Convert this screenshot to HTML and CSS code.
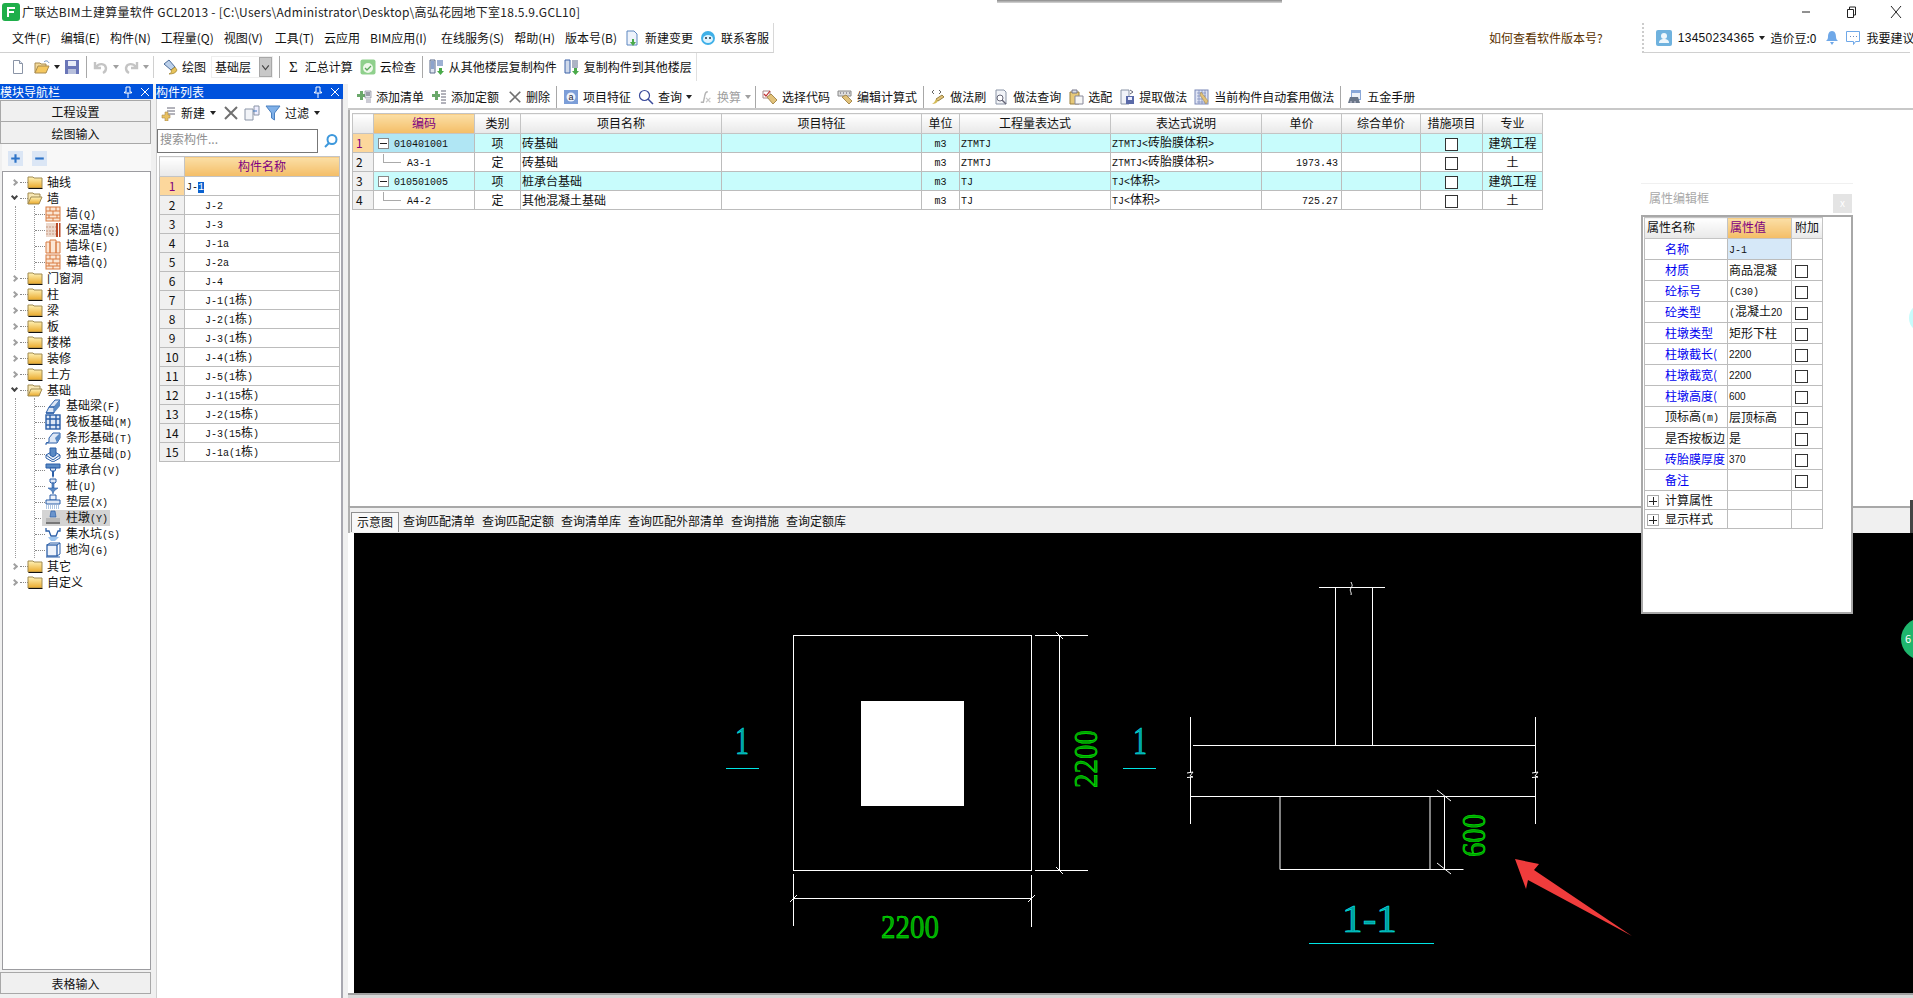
FILE: index.html
```html
<!DOCTYPE html>
<html lang="zh-CN">
<head>
<meta charset="utf-8">
<title>广联达BIM土建算量软件 GCL2013</title>
<link rel="stylesheet" href="styles.css">
</head>
<body>
<svg class="defs" aria-hidden="true">
<defs>
<linearGradient id="fg" x1="0" y1="0" x2="0" y2="1"><stop offset="0" stop-color="#fff3b8"/><stop offset="1" stop-color="#eaa92a"/></linearGradient>
<symbol id="app" viewBox="0 0 18 18"><rect x="0" y="0" width="18" height="18" rx="3" fill="#1fae4a"/><path d="M5 4h8v2H7v2h5v2H7v4H5z" fill="#fff"/></symbol>
<symbol id="doc" viewBox="0 0 16 16"><path d="M3.500 1.500h6l3 3v10h-9z" fill="#fff" stroke="#8a94a6"/><path d="M9.500 1.500v3h3" fill="#dfe6f2" stroke="#8a94a6"/></symbol>
<symbol id="open" viewBox="0 0 16 16"><path d="M1 14V4h5l1 1h5v2" fill="#f3d99a" stroke="#a88b50"/><path d="M1 14l3-7h11l-3 7z" fill="#f5c860" stroke="#a88b50"/><path d="M10 3c2-2 4-1 5 1" fill="none" stroke="#6a8fc0"/></symbol>
<symbol id="save" viewBox="0 0 16 16"><rect x="1" y="1" width="14" height="14" fill="#6a76b8"/><rect x="4" y="2" width="8" height="5" fill="#e8ecf8"/><rect x="4" y="10" width="8" height="5" fill="#b8c0dc"/></symbol>
<symbol id="undo" viewBox="0 0 16 16"><path d="M2 3v6h6M3 8c3-4 9-4 10 1 0 2-1 4-3 5" fill="none" stroke="#c4c4c4" stroke-width="2.400"/></symbol>
<symbol id="redo" viewBox="0 0 16 16"><path d="M14 3v6H8M13 8C10 4 4 4 3 9c0 2 1 4 3 5" fill="none" stroke="#c4c4c4" stroke-width="2.400"/></symbol>
<symbol id="paint" viewBox="0 0 16 16"><path d="M2 5l5-4 6 7-4 3z" fill="#bcd0ea" stroke="#4d6d9a"/><path d="M9 11l4-3 2 3c-1 3-4 4-8 4 2-1 3-2 2-4z" fill="#e8c35a" stroke="#9a7d2a" stroke-width=".7"/></symbol>
<symbol id="cloud" viewBox="0 0 16 16"><rect x="0.500" y="0.500" width="15" height="15" rx="2" fill="#8fd08c"/><circle cx="8" cy="9" r="5" fill="#eef8ea"/><path d="M5 9l2 2 4-4" fill="none" stroke="#5aa85a" stroke-width="1.300"/></symbol>
<symbol id="copy1" viewBox="0 0 16 16"><path d="M1 1h5v13H1z" fill="#dfe6f0" stroke="#5a6a8a"/><path d="M2 3h3M2 5h3M2 7h3M2 9h3M8 2h6M8 4h6M8 6h6" stroke="#3c62a8"/><path d="M10 9h3v3h2l-3.500 4L8 12h2z" fill="#4aaa4a"/></symbol>
<symbol id="copy2" viewBox="0 0 16 16"><path d="M1 1h5v13H1z" fill="#cfd9ea" stroke="#3c62a8"/><path d="M8 2h6M8 4h6M8 6h6M8 8h6" stroke="#5a6a8a"/><path d="M10 9h3v3h2l-3.500 4L8 12h2z" fill="#4aaa4a"/></symbol>
<symbol id="newc" viewBox="0 0 16 16"><path d="M3 1h7l3 3v11H3z" fill="#eef3fb" stroke="#5d87c0"/><path d="M8 9h2v3h2l-3 4-3-4h2z" fill="#4aaa4a"/></symbol>
<symbol id="svc" viewBox="0 0 16 16"><circle cx="8" cy="8" r="7" fill="#3fb0e8"/><ellipse cx="8" cy="9" rx="5" ry="4" fill="#dff4ff"/><circle cx="6" cy="8" r="1" fill="#234"/><circle cx="10" cy="8" r="1" fill="#234"/></symbol>
<symbol id="addl" viewBox="0 0 16 16"><path d="M1 5h3V2h3v3h2v3H7v3H4V8H1z" fill="#6aa86a"/><path d="M9 2h6v7H9z" fill="#e4e8ee" stroke="#778" stroke-width=".6"/><path d="M10 4h4M10 6h4" stroke="#556"/><path d="M10 11h5M10 13h5" stroke="#99a"/></symbol>
<symbol id="addd" viewBox="0 0 16 16"><path d="M1 5h3V2h3v3h2v3H7v3H4V8H1z" fill="#6aa86a"/><path d="M10 2h5M10 5h5M10 8h5M10 11h5M10 14h5" stroke="#667"/></symbol>
<symbol id="del" viewBox="0 0 16 16"><path d="M2 2l12 12M14 2L2 14" stroke="#707070" stroke-width="2"/></symbol>
<symbol id="feat" viewBox="0 0 16 16"><rect x="1" y="1" width="14" height="14" fill="#7c9ed8"/><circle cx="8" cy="8" r="4.500" fill="#eef2fa"/><text x="8" y="11" font-size="9" text-anchor="middle" fill="#223" font-family="Liberation Sans">a</text></symbol>
<symbol id="find" viewBox="0 0 16 16"><circle cx="6.500" cy="6.500" r="5" fill="none" stroke="#3a4a9a" stroke-width="1.200"/><path d="M10 10l5 5" stroke="#3a4a9a" stroke-width="1.500"/></symbol>
<symbol id="fx" viewBox="0 0 16 16"><path d="M10 2C7 2 7 4 6.500 7L5 14H2" fill="none" stroke="#b4b4b4" stroke-width="1.600"/><path d="M8 9l5 5M13 9l-5 5" stroke="#c8c8c8" stroke-width="1.400"/></symbol>
<symbol id="pick" viewBox="0 0 16 16"><path d="M1 2h7v7H1z" fill="#fff" stroke="#a88"/><path d="M2 5l2 2 4-5" fill="none" stroke="#c03030" stroke-width="1.200"/><path d="M5 8l4-3 6 6-4 4z" fill="#e2c27a" stroke="#a88b50"/></symbol>
<symbol id="edit" viewBox="0 0 16 16"><path d="M1 2h13v5H1z" fill="#ddd" stroke="#888"/><path d="M3 4h1M6 4h1M9 4h1M12 4h1" stroke="#556"/><path d="M5 8l4-2 6 6-3 3z" fill="#e2c27a" stroke="#a88b50"/></symbol>
<symbol id="brush" viewBox="0 0 16 16"><path d="M2 3l2-2M2 3l2 2M9 1l2 2-2 2" fill="none" stroke="#666"/><path d="M12 6l2 2-6 4-2-2z" fill="#e2c27a" stroke="#968040"/><path d="M6 10l2 2c-1 2-3 3-6 3 2-1 3-3 4-5z" fill="#d4bb58"/></symbol>
<symbol id="qry" viewBox="0 0 16 16"><path d="M3 1h8l2 2v12H3z" fill="#f2f4f8" stroke="#8a94a6"/><circle cx="7" cy="9" r="3" fill="#fff" stroke="#667"/><path d="M9 11l4 4" stroke="#667" stroke-width="1.400"/></symbol>
<symbol id="sel" viewBox="0 0 16 16"><path d="M2 3h9v12H2z" fill="#e6c878" stroke="#9a8040"/><path d="M4 1h5v3H4z" fill="#d8dce6" stroke="#778"/><path d="M7 7h8v8H7z" fill="#f6f6f6" stroke="#889"/></symbol>
<symbol id="ext" viewBox="0 0 16 16"><path d="M2 1h8v14H2z" fill="#f0f2f8" stroke="#8a94a6"/><rect x="7" y="7" width="8" height="8" fill="#5a6aa8"/><rect x="9" y="8" width="4" height="3" fill="#eef"/><path d="M11 1l3 2-3 2" fill="none" stroke="#667"/></symbol>
<symbol id="auto" viewBox="0 0 16 16"><rect x="1" y="1" width="13" height="14" fill="#dfe4f4" stroke="#7a88b8"/><path d="M3 4h9M3 7h9M3 10h9M3 13h9M5 1v14M8 1v14M11 1v14" stroke="#7a88b8" stroke-width=".7"/><path d="M7 3l7 9-2 3-6-9z" fill="#e2c27a" stroke="#a88b50" stroke-width=".6"/></symbol>
<symbol id="hand" viewBox="0 0 16 16"><path d="M4 1h10v10H4z" fill="#8aa8d8"/><path d="M5 4h8v6H5z" fill="#eef2f8"/><path d="M1 14l2-6h8l2 6z" fill="#6a7688"/><path d="M3 13h2M7 13h2" stroke="#ccd"/></symbol>
<symbol id="user" viewBox="0 0 16 16"><rect width="16" height="16" rx="2" fill="#6fb2de"/><circle cx="8" cy="6" r="3" fill="#eef7fc"/><path d="M3 13c0-3 2-4 5-4s5 1 5 4z" fill="#eef7fc"/></symbol>
<symbol id="bell" viewBox="0 0 16 16"><path d="M8 1c3 0 4 3 4 6 0 2 1 3 2 4H2c1-1 2-2 2-4 0-3 1-6 4-6z" fill="#6fa8e8"/><path d="M6 12h4l-2 3z" fill="#6fa8e8"/></symbol>
<symbol id="chat" viewBox="0 0 16 16"><path d="M1.500 1.500h13v10h-4l-2 3v-3h-7z" fill="#fff" stroke="#6fa8e8"/><path d="M5 6.500h1M8 6.500h1M11 6.500h1" stroke="#6a8ac0"/></symbol>
<symbol id="search" viewBox="0 0 16 16"><circle cx="9" cy="6.500" r="4.500" fill="none" stroke="#3d98dc" stroke-width="2"/><path d="M6 10l-4 4" stroke="#3d98dc" stroke-width="2"/></symbol>
<symbol id="newp" viewBox="0 0 16 16"><path d="M6 3h8M6 6h8M6 9h8" stroke="#667"/><path d="M1 10h3V7h3v3h2v3H7v3H4v-3H1z" fill="#e8c060" stroke="#a88b50" stroke-width=".6"/></symbol>
<symbol id="cpy" viewBox="0 0 16 16"><path d="M1 4h8v11H1z" fill="#f2f4f8" stroke="#8a94a6"/><path d="M10 1h5v9h-5z" fill="#eef" stroke="#8a94a6"/><path d="M9 6h4" stroke="#3c78c0"/></symbol>
<symbol id="filt" viewBox="0 0 16 16"><path d="M1 1h14L9.500 8v7l-3-2V8z" fill="#7fb0e8" stroke="#4a80c0"/></symbol>
<symbol id="fold" viewBox="0 0 16 16"><path d="M1 14V3h5l1 1h8v10z" fill="url(#fg)" stroke="#a08a50"/><path d="M1.500 14.500h14" stroke="#111"/></symbol>
<symbol id="foldo" viewBox="0 0 16 16"><path d="M1 14V3h5l1 1h6v3" fill="#f7e7b4" stroke="#a08a50"/><path d="M1 14l3-7h11l-3 7z" fill="url(#fg)" stroke="#a08a50"/></symbol>
<symbol id="wall" viewBox="0 0 16 16"><rect x="1" y="1" width="14" height="14" fill="#fbe6d4" stroke="#d87a40"/><path d="M1 5h14M1 9h14M1 12h14M5 1v4M11 1v4M8 5v4M4 9v3M12 9v3M8 12v3" stroke="#d87a40"/></symbol>
<symbol id="wall2" viewBox="0 0 16 16"><rect x="1" y="1" width="10" height="14" fill="#ecd8cc"/><path d="M1 5h10M1 9h10M1 12h10" stroke="#c89880" stroke-dasharray="2 1"/><rect x="11" y="1" width="2" height="14" fill="#b84a28"/><rect x="14" y="1" width="1.500" height="14" fill="#b84a28"/></symbol>
<symbol id="pier" viewBox="0 0 16 16"><path d="M1 4h4v11H1zM5 2h6v13H5zM11 4h4v11h-4z" fill="#fbe6d4" stroke="#d87a40"/></symbol>
<symbol id="beam" viewBox="0 0 16 16"><path d="M1 15l3-6h5v6zM4 9l6-7h5l-6 7z" fill="#dde7f5" stroke="#2b5fa8"/><path d="M9 15l6-7V2L9 9z" fill="#5a8ac4"/><path d="M1 15h8" stroke="#2b5fa8" stroke-width="1.500"/></symbol>
<symbol id="raft" viewBox="0 0 16 16"><rect x="1" y="1" width="14" height="14" fill="#dde7f5" stroke="#2b5fa8" stroke-width="1.400"/><path d="M1 5h14M1 11h14M5 1v14M11 1v14" stroke="#2b5fa8" stroke-width="1.400"/></symbol>
<symbol id="strip" viewBox="0 0 16 16"><path d="M1 15v-2l3-1V8l4-5h7v5l-3 5H1" fill="#dde7f5" stroke="#2b5fa8"/><path d="M10 8l5-5v5l-3 5z" fill="#5a8ac4"/></symbol>
<symbol id="iso" viewBox="0 0 16 16"><path d="M1 9l7-4 7 4-7 5z" fill="#e6eef8" stroke="#2b5fa8"/><path d="M1 9v3l7 4 7-4V9" fill="none" stroke="#2b5fa8"/><path d="M5 2h6v7l-3 2-3-2z" fill="#5a8ac4" stroke="#2b5fa8"/></symbol>
<symbol id="cap" viewBox="0 0 16 16"><path d="M1 2h14v4H1z" fill="#5a8ac4" stroke="#2b5fa8"/><path d="M5 6h6l-1 3H6z" fill="#dde7f5" stroke="#2b5fa8"/><path d="M7 9h2v5l-1 2-1-2z" fill="#2b5fa8"/></symbol>
<symbol id="pile" viewBox="0 0 16 16"><path d="M5 1h6v3l-1 1H6L5 4z" fill="#dde7f5" stroke="#2b5fa8"/><path d="M7 5h2v5H7z" fill="#5a8ac4" stroke="#2b5fa8" stroke-width=".6"/><path d="M3 10h10l-4 3-1 3-1-3z" fill="#5a8ac4" stroke="#2b5fa8" stroke-width=".6"/></symbol>
<symbol id="bed" viewBox="0 0 16 16"><path d="M5 1h6v5H5z" fill="#eef3fb" stroke="#2b5fa8"/><path d="M1 6h14v4H1z" fill="#dde7f5" stroke="#2b5fa8"/><path d="M1 12h14M1 14h14" stroke="#5a8ac4" stroke-dasharray="1 1"/></symbol>
<symbol id="ped" viewBox="0 0 16 16"><path d="M6 1h4l1 6H5z" fill="#6a94cc" stroke="#2b5fa8" stroke-width=".7"/><path d="M1 8h14v4H1z" fill="#b8b8b8"/><path d="M1 13h14" stroke="#777" stroke-width="2"/></symbol>
<symbol id="pit" viewBox="0 0 16 16"><path d="M1 2v3h3l2 5h5l2-5h2V2" fill="none" stroke="#2b5fa8" stroke-width="1.300"/><path d="M3 11h11l-4 4H6z" fill="#9cc4ee"/></symbol>
<symbol id="tr" viewBox="0 0 16 16"><rect x="2" y="3" width="10" height="11" fill="#eef3fb" stroke="#2b5fa8" stroke-width="1.300"/><path d="M2 3l3-2h10l-3 2M12 14l3-2V1M1 15h14" fill="none" stroke="#2b5fa8"/></symbol>
</defs>
</svg>

<div class="app">
  <header class="titlebar">
    <svg class="app-icon"><use href="#app"/></svg>
    <span class="title-text">广联达BIM土建算量软件 GCL2013 - [C:\Users\Administrator\Desktop\高弘花园地下室18.5.9.GCL10]</span>
    <div class="winctl">
      <svg class="wc" viewBox="0 0 12 12"><path d="M2 6h8" stroke="#222"/></svg>
      <svg class="wc" viewBox="0 0 12 12"><path d="M2.500 3.500h6v8h-6zM4.500 3.500v-2.500h6v8h-2" fill="none" stroke="#222"/></svg>
      <svg class="wc" viewBox="0 0 12 12"><path d="M1 0l10 12M11 0L1 12" stroke="#222"/></svg>
    </div>
  </header>
  <div class="topshadow"></div>

  <div class="menurow">
    <nav class="menu">
      <span>文件(F)</span><span>编辑(E)</span><span>构件(N)</span><span>工程量(Q)</span><span>视图(V)</span><span class="mx2">工具(T)</span><span>云应用</span><span>BIM应用(I)</span><span class="mx4">在线服务(S)</span><span>帮助(H)</span><span>版本号(B)</span>
      <span class="mi"><svg class="i"><use href="#newc"/></svg>新建变更</span>
      <span class="mi"><svg class="i"><use href="#svc"/></svg>联系客服</span>
    </nav>
    <a class="help">如何查看软件版本号?</a>
    <div class="userbar">
      <svg class="i"><use href="#user"/></svg>
      <span class="phone">13450234365</span><i class="arrow dark"></i>
      <span>造价豆:0</span>
      <svg class="i bellic"><use href="#bell"/></svg>
      <svg class="i"><use href="#chat"/></svg>
      <span>我要建议</span>
    </div>
  </div>

  <div class="toolrow">
    <svg class="i"><use href="#doc"/></svg>
    <svg class="i ic-b"><use href="#open"/></svg><i class="arrow dark"></i>
    <svg class="i"><use href="#save"/></svg>
    <b class="div"></b>
    <svg class="i"><use href="#undo"/></svg><i class="arrow"></i>
    <svg class="i"><use href="#redo"/></svg><i class="arrow"></i>
    <b class="div dots"></b>
    <span class="tool"><svg class="i"><use href="#paint"/></svg>绘图</span>
    <span class="floor"><span>基础层</span><i class="floor-btn"><svg viewBox="0 0 10 10"><path d="M2 3l3 4 3-4" fill="none" stroke="#444"/></svg></i></span>
    <b class="div"></b>
    <span class="tool sigma"><em>Σ</em>汇总计算</span>
    <span class="tool"><svg class="i"><use href="#cloud"/></svg>云检查</span>
    <b class="div"></b>
    <span class="tool"><svg class="i"><use href="#copy1"/></svg>从其他楼层复制构件</span>
    <span class="tool"><svg class="i"><use href="#copy2"/></svg>复制构件到其他楼层</span>
  </div>

  <main class="main">
    <aside class="nav">
      <div class="phead"><span>模块导航栏</span><span class="pctl"><svg class="pin" viewBox="0 0 10 12"><path d="M3 1h4v5h1.500v1h-7V6H3zM5 7v5" fill="none" stroke="#fff"/></svg><svg class="pin" viewBox="0 0 10 12"><path d="M1 2l8 8M9 2l-8 8" stroke="#fff"/></svg></span></div>
      <button class="navbtn">工程设置</button>
      <button class="navbtn">绘图输入</button>
      <div class="treebar">
        <span class="sq"><svg viewBox="0 0 14 14"><path d="M3 7h8M7 3v8" stroke="#2e74c8" stroke-width="2"/></svg></span>
        <span class="sq"><svg viewBox="0 0 14 14"><path d="M3 7h8" stroke="#2e74c8" stroke-width="2"/></svg></span>
      </div>
      <div class="tree">
        <div class="tr"><i class="chev"></i><i class="hd"></i><svg class="i"><use href="#fold"/></svg><span>轴线</span></div>
        <div class="tr"><i class="chev open"></i><i class="hd"></i><svg class="i"><use href="#foldo"/></svg><span>墙</span></div>
        <div class="g1"><div class="g2">
          <div class="tk"><i class="hd2"></i><svg class="i"><use href="#wall"/></svg><span>墙<u>(Q)</u></span></div>
          <div class="tk"><i class="hd2"></i><svg class="i"><use href="#wall2"/></svg><span>保温墙<u>(Q)</u></span></div>
          <div class="tk"><i class="hd2"></i><svg class="i"><use href="#pier"/></svg><span>墙垛<u>(E)</u></span></div>
          <div class="tk"><i class="hd2"></i><svg class="i"><use href="#wall"/></svg><span>幕墙<u>(Q)</u></span></div>
        </div></div>
        <div class="tr"><i class="chev"></i><i class="hd"></i><svg class="i"><use href="#fold"/></svg><span>门窗洞</span></div>
        <div class="tr"><i class="chev"></i><i class="hd"></i><svg class="i"><use href="#fold"/></svg><span>柱</span></div>
        <div class="tr"><i class="chev"></i><i class="hd"></i><svg class="i"><use href="#fold"/></svg><span>梁</span></div>
        <div class="tr"><i class="chev"></i><i class="hd"></i><svg class="i"><use href="#fold"/></svg><span>板</span></div>
        <div class="tr"><i class="chev"></i><i class="hd"></i><svg class="i"><use href="#fold"/></svg><span>楼梯</span></div>
        <div class="tr"><i class="chev"></i><i class="hd"></i><svg class="i"><use href="#fold"/></svg><span>装修</span></div>
        <div class="tr"><i class="chev"></i><i class="hd"></i><svg class="i"><use href="#fold"/></svg><span>土方</span></div>
        <div class="tr"><i class="chev open"></i><i class="hd"></i><svg class="i"><use href="#foldo"/></svg><span>基础</span></div>
        <div class="g1"><div class="g2">
          <div class="tk"><i class="hd2"></i><svg class="i"><use href="#beam"/></svg><span>基础梁<u>(F)</u></span></div>
          <div class="tk"><i class="hd2"></i><svg class="i"><use href="#raft"/></svg><span>筏板基础<u>(M)</u></span></div>
          <div class="tk"><i class="hd2"></i><svg class="i"><use href="#strip"/></svg><span>条形基础<u>(T)</u></span></div>
          <div class="tk"><i class="hd2"></i><svg class="i"><use href="#iso"/></svg><span>独立基础<u>(D)</u></span></div>
          <div class="tk"><i class="hd2"></i><svg class="i"><use href="#cap"/></svg><span>桩承台<u>(V)</u></span></div>
          <div class="tk"><i class="hd2"></i><svg class="i"><use href="#pile"/></svg><span>桩<u>(U)</u></span></div>
          <div class="tk"><i class="hd2"></i><svg class="i"><use href="#bed"/></svg><span>垫层<u>(X)</u></span></div>
          <div class="tk selected"><i class="hd2"></i><span class="selbox"><svg class="i"><use href="#ped"/></svg><span>柱墩<u>(Y)</u></span></span></div>
          <div class="tk"><i class="hd2"></i><svg class="i"><use href="#pit"/></svg><span>集水坑<u>(S)</u></span></div>
          <div class="tk"><i class="hd2"></i><svg class="i"><use href="#tr"/></svg><span>地沟<u>(G)</u></span></div>
        </div></div>
        <div class="tr"><i class="chev"></i><i class="hd"></i><svg class="i"><use href="#fold"/></svg><span>其它</span></div>
        <div class="tr"><i class="chev"></i><i class="hd"></i><svg class="i"><use href="#fold"/></svg><span>自定义</span></div>
      </div>
      <button class="navbtn bottom">表格输入</button>
    </aside>

    <section class="listpanel">
      <div class="phead"><span>构件列表</span><span class="pctl"><svg class="pin" viewBox="0 0 10 12"><path d="M3 1h4v5h1.500v1h-7V6H3zM5 7v5" fill="none" stroke="#fff"/></svg><svg class="pin" viewBox="0 0 10 12"><path d="M1 2l8 8M9 2l-8 8" stroke="#fff"/></svg></span></div>
      <div class="listbody">
        <div class="listtools">
          <span class="tool"><svg class="i"><use href="#newp"/></svg>新建</span><i class="arrow dark"></i>
          <svg class="i lt-x"><use href="#del"/></svg>
          <svg class="i"><use href="#cpy"/></svg>
          <span class="tool"><svg class="i"><use href="#filt"/></svg>过滤</span><i class="arrow dark"></i>
        </div>
        <div class="searchrow"><div class="searchbox">搜索构件...</div><svg class="i"><use href="#search"/></svg></div>
        <table class="grid list">
          <thead><tr><th class="rn"></th><th class="or">构件名称</th></tr></thead>
          <tbody>
            <tr><td class="rn on">1</td><td class="first"><u>J-</u><mark>1</mark></td></tr>
            <tr><td class="rn">2</td><td class="ind"><u>J-2</u></td></tr>
            <tr><td class="rn">3</td><td class="ind"><u>J-3</u></td></tr>
            <tr><td class="rn">4</td><td class="ind"><u>J-1a</u></td></tr>
            <tr><td class="rn">5</td><td class="ind"><u>J-2a</u></td></tr>
            <tr><td class="rn">6</td><td class="ind"><u>J-4</u></td></tr>
            <tr><td class="rn">7</td><td class="ind"><u>J-1(1</u>栋<u>)</u></td></tr>
            <tr><td class="rn">8</td><td class="ind"><u>J-2(1</u>栋<u>)</u></td></tr>
            <tr><td class="rn">9</td><td class="ind"><u>J-3(1</u>栋<u>)</u></td></tr>
            <tr><td class="rn">10</td><td class="ind"><u>J-4(1</u>栋<u>)</u></td></tr>
            <tr><td class="rn">11</td><td class="ind"><u>J-5(1</u>栋<u>)</u></td></tr>
            <tr><td class="rn">12</td><td class="ind"><u>J-1(15</u>栋<u>)</u></td></tr>
            <tr><td class="rn">13</td><td class="ind"><u>J-2(15</u>栋<u>)</u></td></tr>
            <tr><td class="rn">14</td><td class="ind"><u>J-3(15</u>栋<u>)</u></td></tr>
            <tr><td class="rn">15</td><td class="ind"><u>J-1a(1</u>栋<u>)</u></td></tr>
          </tbody>
        </table>
      </div>
    </section>

    <section class="work">
      <div class="worktools">
        <span class="tool"><svg class="i"><use href="#addl"/></svg>添加清单</span>
        <span class="tool"><svg class="i"><use href="#addd"/></svg>添加定额</span>
        <span class="tool delt"><svg class="i sm"><use href="#del"/></svg>删除</span>
        <b class="div"></b>
        <span class="tool"><svg class="i"><use href="#feat"/></svg>项目特征</span>
        <span class="tool"><svg class="i"><use href="#find"/></svg>查询<i class="arrow dark"></i></span>
        <span class="tool off"><svg class="i sm"><use href="#fx"/></svg>换算<i class="arrow"></i></span>
        <b class="div"></b>
        <span class="tool"><svg class="i"><use href="#pick"/></svg>选择代码</span>
        <span class="tool"><svg class="i"><use href="#edit"/></svg>编辑计算式</span>
        <b class="div"></b>
        <span class="tool"><svg class="i"><use href="#brush"/></svg>做法刷</span>
        <span class="tool"><svg class="i"><use href="#qry"/></svg>做法查询</span>
        <span class="tool"><svg class="i"><use href="#sel"/></svg>选配</span>
        <span class="tool"><svg class="i"><use href="#ext"/></svg>提取做法</span>
        <span class="tool"><svg class="i"><use href="#auto"/></svg>当前构件自动套用做法</span>
        <b class="div"></b>
        <span class="tool"><svg class="i"><use href="#hand"/></svg>五金手册</span>
      </div>
      <div class="gridarea">
        <table class="grid bill">
          <colgroup><col class="c0"><col class="c1"><col class="c2"><col class="c3"><col class="c4"><col class="c5"><col class="c6"><col class="c7"><col class="c8"><col class="c9"><col class="c10"><col class="c11"></colgroup>
          <thead><tr><th></th><th class="or">编码</th><th>类别</th><th>项目名称</th><th>项目特征</th><th>单位</th><th>工程量表达式</th><th>表达式说明</th><th>单价</th><th>综合单价</th><th>措施项目</th><th>专业</th></tr></thead>
          <tbody>
            <tr class="cy"><td class="rn on l">1</td><td class="code act"><i class="mn"></i><u>010401001</u></td><td class="ctr">项</td><td>砖基础</td><td></td><td class="ctr"><u>m3</u></td><td><u>ZTMTJ</u></td><td><u>ZTMTJ&lt;</u>砖胎膜体积<u>&gt;</u></td><td></td><td></td><td class="ctr"><i class="cb"></i></td><td class="ctr">建筑工程</td></tr>
            <tr><td class="rn l">2</td><td class="code sub"><i class="ln"></i><u>A3-1</u></td><td class="ctr">定</td><td>砖基础</td><td></td><td class="ctr"><u>m3</u></td><td><u>ZTMTJ</u></td><td><u>ZTMTJ&lt;</u>砖胎膜体积<u>&gt;</u></td><td class="num"><u>1973.43</u></td><td></td><td class="ctr"><i class="cb"></i></td><td class="ctr">土</td></tr>
            <tr class="cy"><td class="rn l">3</td><td class="code"><i class="mn"></i><u>010501005</u></td><td class="ctr">项</td><td>桩承台基础</td><td></td><td class="ctr"><u>m3</u></td><td><u>TJ</u></td><td><u>TJ&lt;</u>体积<u>&gt;</u></td><td></td><td></td><td class="ctr"><i class="cb"></i></td><td class="ctr">建筑工程</td></tr>
            <tr><td class="rn l">4</td><td class="code sub"><i class="ln"></i><u>A4-2</u></td><td class="ctr">定</td><td>其他混凝土基础</td><td></td><td class="ctr"><u>m3</u></td><td><u>TJ</u></td><td><u>TJ&lt;</u>体积<u>&gt;</u></td><td class="num"><u>725.27</u></td><td></td><td class="ctr"><i class="cb"></i></td><td class="ctr">土</td></tr>
          </tbody>
        </table>
      </div>
      <div class="tabs">
        <span class="tab active">示意图</span><span class="tab">查询匹配清单</span><span class="tab">查询匹配定额</span><span class="tab">查询清单库</span><span class="tab">查询匹配外部清单</span><span class="tab">查询措施</span><span class="tab">查询定额库</span>
      </div>
      <div class="canvas">
        <svg class="drawing" viewBox="354 533 1559 460" preserveAspectRatio="xMinYMin meet">
          <g class="w">
            <rect x="793.500" y="635.500" width="238" height="235"/>
            <path d="M1035 635.500h53M1035 870.500h53M1059.500 635.500v235M1056 632l7 7M1056 867l7 7"/>
            <path d="M793.500 874v52M1031.500 875v52M793.500 898.500h238M790 902l7-7M1028 902l7-7"/>
            <path d="M1319 587.500h66M1351 582c1 3 2 3 0 6s1 4 0 7M1335.500 587v158M1372.500 587v158M1193 745.500h343"/>
            <path d="M1190.500 717v56M1190.500 777v47M1535.500 717v56M1535.500 777v47M1187 773l6-1-3 4 3 1-6 .5M1532 773l6-1-3 4 3 1-6 .5"/>
            <path d="M1190.500 796.500h345M1280 796.500v73h150v-73M1429.500 869.500h34M1444.500 796v73M1437 790l14 11M1437 863l14 11"/>
          </g>
          <rect class="solid" x="861" y="701" width="103" height="105"/>
          <g class="cy-l"><path d="M726 768.500h33M1123 768.500h33M1309 943.500h125"/></g>
          <text class="cad gr" x="881" y="938" textLength="58" lengthAdjust="spacingAndGlyphs">2200</text>
          <text class="cad gr" transform="translate(1097 788) rotate(-90)" textLength="58" lengthAdjust="spacingAndGlyphs">2200</text>
          <text class="cad gr" transform="translate(1485 857) rotate(-90)" textLength="43" lengthAdjust="spacingAndGlyphs">600</text>
          <text class="cad cy1" x="735" y="754" textLength="14" lengthAdjust="spacingAndGlyphs">1</text>
          <text class="cad cy1" x="1133" y="754" textLength="14" lengthAdjust="spacingAndGlyphs">1</text>
          <text class="cad cy1" x="1342" y="932" textLength="55" lengthAdjust="spacingAndGlyphs">1-1</text>
          <path class="redarrow" d="M1515 859l24 5-5 6 98 66-104-56-2 9z"/>
        </svg>
      </div>
      <div class="statusline"></div>
    </section>
  </main>

  <aside class="propdlg">
    <div class="propttl"><span>属性编辑框</span><i class="propx">x</i></div>
    <div class="propframe">
      <table class="grid prop">
        <colgroup><col class="p0"><col class="p1"><col class="p2"></colgroup>
        <thead><tr><th class="pl">属性名称</th><th class="or pl2">属性值</th><th>附加</th></tr></thead>
        <tbody>
          <tr><td class="pn">名称</td><td class="val hl"><u>J-1</u></td><td></td></tr>
          <tr><td class="pn">材质</td><td class="val">商品混凝</td><td class="ck"><i class="cb"></i></td></tr>
          <tr><td class="pn">砼标号</td><td class="val"><u>(C30)</u></td><td class="ck"><i class="cb"></i></td></tr>
          <tr><td class="pn">砼类型</td><td class="val"><u>(</u>混凝土<small>20</small></td><td class="ck"><i class="cb"></i></td></tr>
          <tr><td class="pn">柱墩类型</td><td class="val">矩形下柱</td><td class="ck"><i class="cb"></i></td></tr>
          <tr><td class="pn">柱墩截长(</td><td class="val"><small>2200</small></td><td class="ck"><i class="cb"></i></td></tr>
          <tr><td class="pn">柱墩截宽(</td><td class="val"><small>2200</small></td><td class="ck"><i class="cb"></i></td></tr>
          <tr><td class="pn">柱墩高度(</td><td class="val"><small>600</small></td><td class="ck"><i class="cb"></i></td></tr>
          <tr><td class="pn blk">顶标高<u>(m)</u></td><td class="val">层顶标高</td><td class="ck"><i class="cb"></i></td></tr>
          <tr><td class="pn blk">是否按板边</td><td class="val">是</td><td class="ck"><i class="cb"></i></td></tr>
          <tr><td class="pn">砖胎膜厚度</td><td class="val"><small>370</small></td><td class="ck"><i class="cb"></i></td></tr>
          <tr><td class="pn">备注</td><td class="val"></td><td class="ck"><i class="cb"></i></td></tr>
          <tr class="short"><td class="pg"><i class="pb"></i>计算属性</td><td></td><td></td></tr>
          <tr class="short"><td class="pg"><i class="pb"></i>显示样式</td><td></td><td></td></tr>
        </tbody>
      </table>
    </div>
  </aside>

  <i class="edge edge-cyan"></i>
  <i class="edge edge-dark"></i>
  <i class="edge edge-green">6</i>
</div>
</body>
</html>
```
FILE: styles.css
```css
* { box-sizing: border-box; }
html, body { margin: 0; padding: 0; height: 100%; }
body { font: 12px/16px "Noto Sans CJK SC", "Liberation Sans", sans-serif; color: #111; background: #fff; overflow: hidden; }
.defs { position: absolute; width: 0; height: 0; }
.app { position: relative; width: 1913px; height: 998px; overflow: hidden; display: flex; flex-direction: column; }
i, em { font-style: normal; }
u { text-decoration: none; font-family: "Liberation Mono", monospace; font-size: 10px; }
small { font-family: "Liberation Sans", sans-serif; font-size: 10px; }
.i { width: 16px; height: 16px; flex: none; display: block; }
.arrow { width: 0; height: 0; flex: none; border: 3px solid transparent; border-top: 4px solid #a0a0a0; border-bottom: 0; display: inline-block; }
.arrow.dark { border-top-color: #222; }

.titlebar { height: 23px; flex: none; display: flex; align-items: center; padding-left: 2px; }
.app-icon { width: 18px; height: 18px; flex: none; }
.title-text { margin-left: 2px; font-size: 12px; color: #222; letter-spacing: .27px; }
.winctl { margin-left: auto; display: flex; gap: 33px; padding-right: 11px; }
.wc { width: 12px; height: 12px; display: block; }
.topshadow { position: absolute; left: 997px; top: 0; width: 285px; height: 3px; background: linear-gradient(#8a8a8a, #d8d8d8); }

.menurow { height: 30px; flex: none; display: flex; }
.menu { width: 774px; flex: none; display: flex; align-items: center; gap: 10px; padding-left: 12px; border-right: 1px solid #d8d8d8; border-bottom: 1px solid #d0d0d0; }
.mx2 { margin-left: 2px; }
.mx4 { margin-left: 4px; }
.mi { display: flex; align-items: center; gap: 5px; margin-left: -3px; }
.help { margin-left: 715px; color: #5a3200; align-self: center; white-space: nowrap; }
.userbar { margin-left: 39px; flex: none; width: 268px; display: flex; align-items: center; gap: 5px; padding-left: 12px; border-left: 2px dotted #ccc; border-bottom: 1px solid #d0d0d0; white-space: nowrap; }
.phone { font-family: "Liberation Sans", sans-serif; font-size: 12px; letter-spacing: .3px; margin-left: 1px; }
.bellic { margin-left: 3px; }

.toolrow { height: 28px; width: 697px; flex: none; display: flex; align-items: center; padding-left: 10px; gap: 4px; border-right: 1px solid #e0e0e0; }
.ic-b { margin-left: 4px; }
.tool { display: inline-flex; align-items: center; gap: 4px; white-space: nowrap; }
.toolrow .tool + .tool { margin-left: 3px; }
.off { color: #a0a0a0; margin-right: -2px; }
.div { width: 1px; height: 22px; background: #a8a8a8; flex: none; margin: 0 2px; }
.div.dots { margin: 0 4px 0 0; background: #d0d0d0; }
.floor { width: 62px; height: 22px; display: flex; align-items: center; justify-content: space-between; padding-left: 3px; background: #fff; border: 1px solid #eee; flex: none; margin-left: 1px; }
.floor-btn { width: 13px; height: 20px; background: #c8c8c8; border: 1px solid #a8a8a8; display: flex; align-items: center; }
.floor-btn svg { width: 11px; height: 11px; }
.sigma em { font-family: "Liberation Serif", serif; font-size: 15px; margin: 0 3px 0 3px; }

.main { flex: 1; min-height: 0; margin-top: 3px; display: flex; background: #f0f0f0; }
.phead { height: 15px; background: #0052dc; color: #fff; display: flex; justify-content: space-between; align-items: center; flex: none; }
.pctl { display: flex; gap: 7px; padding-right: 3px; align-items: center; }
.pin { width: 10px; height: 12px; display: block; }

.nav { width: 153px; flex: none; display: flex; flex-direction: column; }
.navbtn { height: 22px; flex: none; border: 1px solid #a8a8a8; background: #f0f0f0; font: inherit; color: #111; padding: 2px 0 0; width: 151px; }
.navbtn + .navbtn { border-top: 0; }
.phead + .navbtn { margin-top: 1px; }
.treebar { height: 27px; flex: none; display: flex; gap: 9px; align-items: center; padding: 1px 0 0 6px; margin: 0 2px; background: #f8f8f8; }
.sq { width: 15px; height: 15px; background: #dbe6f5; display: block; }
.sq svg { display: block; width: 15px; height: 15px; }
.tree { height: 799px; flex: none; width: 149px; margin-left: 2px; background: #fff; border: 1px solid #9c9ca0; padding-top: 2px; }
.tr { height: 16px; display: flex; align-items: center; padding-left: 9px; }
.tr .i { margin-right: 4px; }
.chev { width: 5px; height: 5px; border: solid #a0a0a0; border-width: 2px 2px 0 0; transform: rotate(45deg); flex: none; }
.chev.open { border-color: #444; transform: rotate(135deg); margin-top: -3px; }
.hd { width: 8px; border-top: 1px dotted #888; margin-left: 3px; margin-right: -1px; flex: none; }
.g1 { margin-left: 12px; border-left: 1px dotted #999; }
.g2 { margin-left: 18px; border-left: 1px dotted #999; margin-bottom: 8px; }
.tk { height: 16px; display: flex; align-items: center; white-space: nowrap; }
.tk:last-child { margin-bottom: -8px; }
.hd2 { width: 10px; border-top: 1px dotted #888; flex: none; }
.tk > .i, .selbox .i { margin-right: 5px; }
.selbox { display: flex; align-items: center; background: #d4d4d4; height: 16px; margin-left: -3px; padding-left: 3px; padding-right: 2px; }
.bottom { margin-top: 2px; border-top: 1px solid #a8a8a8; }

.listpanel { width: 192px; flex: none; display: flex; flex-direction: column; margin-left: 3px; }
.listpanel .phead { width: 187px; }
.listbody { flex: 1; width: 187px; background: #fff; border-right: 2px solid #a8a8b0; border-left: 1px solid #d0d0d0; }
.listtools { height: 29px; display: flex; align-items: center; gap: 5px; padding: 0 0 2px 4px; }
.lt-x { margin-left: 2px; }
.searchrow { display: flex; align-items: center; gap: 5px; height: 25px; }
.searchbox { width: 161px; height: 24px; border: 1px solid #777; color: #909090; padding: 1px 2px; }
.grid { border-collapse: collapse; table-layout: fixed; }
.grid th { height: 20px; padding: 0 0 2px; font-weight: 400; background: linear-gradient(#fff, #e8e8e8); border: 1px solid #c4c4c4; }
.grid td { height: 19px; padding: 0 1px; line-height: 14px; border: 1px solid #bcbcbc; white-space: nowrap; overflow: hidden; }
.grid th.or { background: linear-gradient(#fbdfa6, #f4bd66); color: #800080; }
.list { width: 181px; margin: 3px 0 0 2px; }
.list .rn { width: 25px; }
.rn { background: #f0f0f0; text-align: center; }
.grid td.rn { background: #f0f0f0; }
.grid td.rn.on { background: #fcd79c; color: #800080; }
.ind { padding-left: 20px !important; }
mark { background: #0a62d0; color: #fff; font: 10px "Liberation Mono", monospace; }

.work { flex: 1; min-width: 0; display: flex; flex-direction: column; background: #fff; }
.worktools { height: 26px; flex: none; display: flex; align-items: center; gap: 7px; padding: 1px 0 0 8px; white-space: nowrap; border-bottom: 2px solid #c8c8c8; }
.worktools .div { margin: 0 -1px; }
.sm { width: 14px; }
.delt { margin-left: 2px; }
.gridarea { height: 396px; flex: none; padding: 3px 0 0 2px; background: #fff; border-left: 2px solid #b0b0b0; }
.bill { width: 1190px; }
.c0 { width: 21px; } .c1 { width: 101px; } .c2 { width: 46px; } .c3 { width: 201px; } .c4 { width: 200px; }
.c5 { width: 38px; } .c6 { width: 151px; } .c7 { width: 151px; } .c8 { width: 80px; } .c9 { width: 79px; } .c10 { width: 62px; } .c11 { width: 60px; }
.cy td { background: #c8fcfc; }
.grid .cy td.act { background: #b0e6f4; }
.rn.l { text-align: left; padding-left: 3px; }
.mn { display: inline-block; width: 11px; height: 11px; margin: 0 5px 0 3px; vertical-align: -2px; border: 1px solid #888; background: #fff linear-gradient(#222, #222) center / 7px 1px no-repeat; }
.sub .ln { display: inline-block; width: 18px; height: 9px; margin: 0 6px 0 8px; vertical-align: 3px; border-left: 1px solid #aaa; border-bottom: 1px solid #aaa; }
.ctr { text-align: center; padding: 0 !important; }
.ck { padding-left: 3px !important; }
.num { text-align: right; padding-right: 3px !important; }
.cb { display: inline-block; width: 13px; height: 13px; border: 1px solid #333; background: #fff; vertical-align: -3px; }

.tabs { height: 27px; flex: none; display: flex; align-items: flex-end; padding: 0 0 1px 1px; gap: 7px; background: #f0f0f0; border-top: 2px solid #a8a8a8; border-left: 2px solid #b0b0b0; white-space: nowrap; }
.tab { height: 20px; line-height: 18px; }
.tab.active { width: 48px; text-align: center; background: #f8f8f8; border: 1px solid #909090; border-bottom: 0; margin-right: -3px; }
.canvas { height: 460px; flex: none; background: #000; margin-left: 6px; }
.drawing { display: block; width: 1559px; height: 460px; }
.w { fill: none; stroke: #fff; stroke-width: 1; }
.solid { fill: #fff; }
.cy-l { fill: none; stroke: #00e5e5; }
.cad { font-family: "Liberation Serif", serif; }
.gr { fill: #00a000; stroke: #00ff00; stroke-width: .5; font-size: 34px; }
.cy1 { fill: #00a0a0; stroke: #00f0f0; stroke-width: .5; font-size: 39px; }
.redarrow { fill: #f03c3c; }
.statusline { flex: 1; background: #d8d8d8; border-top: 2px solid #a0a0a0; }

.propdlg { position: absolute; left: 1641px; top: 183px; width: 212px; height: 430px; background: #fff; border-top: 1px solid #f0f0f0; }
.propttl { height: 31px; display: flex; align-items: center; justify-content: space-between; padding: 0 0 4px 8px; color: #a8a8a8; }
.propx { width: 19px; height: 19px; background: #e4e4e4; color: #fff; text-align: center; line-height: 17px; font-size: 10px; margin-top: 12px; margin-right: 1px; }
.propframe { height: 399px; border: 2px solid #a8a8a8; padding: 0 0 0 1px; }
.prop { width: 178px; }
.p0 { width: 83px; } .p1 { width: 64px; } .p2 { width: 31px; }
.prop th { height: 21px; }
.prop td { height: 21px; }
.prop tr.short td { height: 19px; }
.pl { text-align: left; padding-left: 2px !important; }
.pl2 { text-align: left; padding-left: 2px !important; }
.pn { color: #0000f0; padding-left: 20px !important; }
.pn.blk { color: #111; }
.val { padding-left: 1px !important; }
.hl { background: #d6e8f8; }
.pg { padding-left: 2px !important; }
.pb { display: inline-block; width: 12px; height: 12px; margin-right: 6px; vertical-align: -2px; border: 1px solid #aaa; background: linear-gradient(#222, #222) center / 8px 1px no-repeat, linear-gradient(#222, #222) center / 1px 8px no-repeat, #fff; }

.edge { position: absolute; display: block; }
.edge-cyan { left: 1909px; top: 303px; width: 30px; height: 30px; border-radius: 50%; background: #c8fcfc; }
.edge-dark { left: 1910px; top: 500px; width: 3px; height: 33px; background: #444; }
.edge-green { left: 1901px; top: 618px; width: 42px; height: 42px; border-radius: 50%; background: #1fb66d; color: #fff; padding: 12px 0 0 4px; font-size: 11px; }
```
